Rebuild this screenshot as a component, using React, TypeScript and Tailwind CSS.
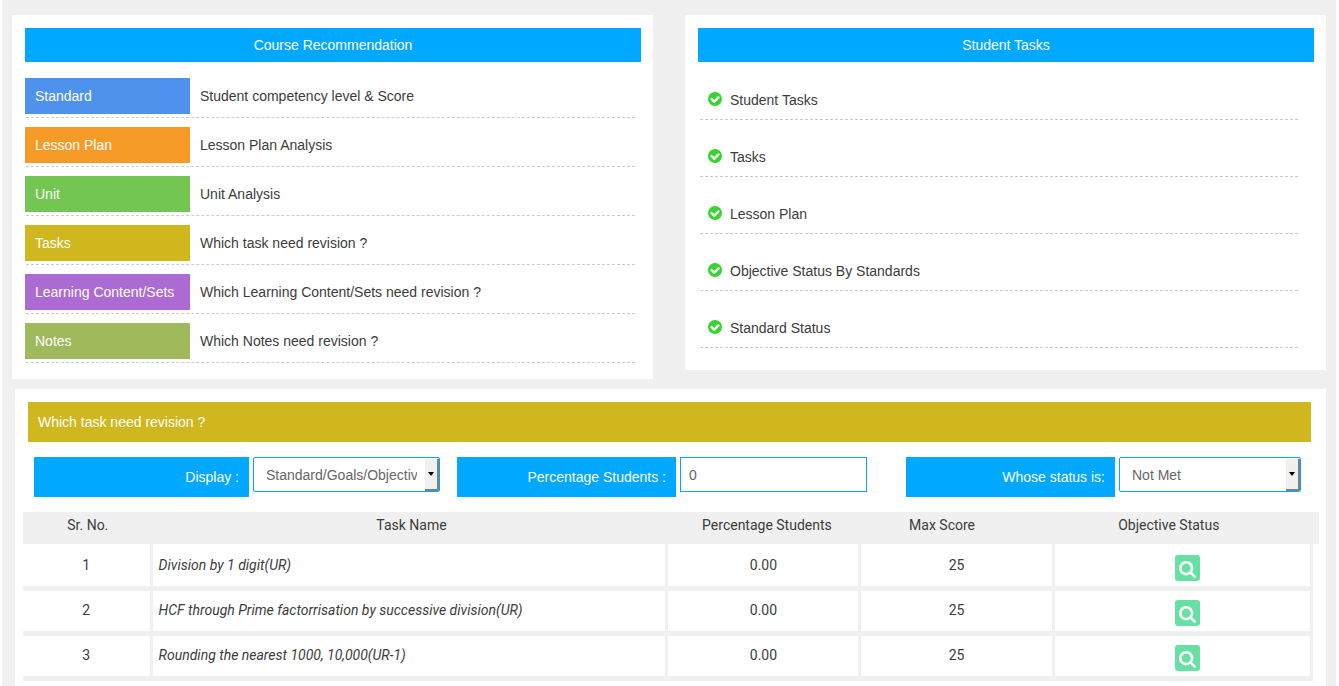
import type { ReactNode } from "react";

const courses = [
  { label: "Standard", text: "Student competency level & Score", color: "bg-[#4f92ee]" },
  { label: "Lesson Plan", text: "Lesson Plan Analysis", color: "bg-[#f79b28]" },
  { label: "Unit", text: "Unit Analysis", color: "bg-[#74c652]" },
  { label: "Tasks", text: "Which task need revision ?", color: "bg-[#d0b71d]" },
  { label: "Learning Content/Sets", text: "Which Learning Content/Sets need revision ?", color: "bg-[#ab6bd3]" },
  { label: "Notes", text: "Which Notes need revision ?", color: "bg-[#a1b95d]" },
];

const studentTasks = ["Student Tasks", "Tasks", "Lesson Plan", "Objective Status By Standards", "Standard Status"];

const rows = [
  { no: 1, name: "Division by 1 digit(UR)", percent: "0.00", max: 25 },
  { no: 2, name: "HCF through Prime factorrisation by successive division(UR)", percent: "0.00", max: 25 },
  { no: 3, name: "Rounding the nearest 1000, 10,000(UR-1)", percent: "0.00", max: 25 },
];

function CheckIcon() {
  return (
    <svg viewBox="0 128 1536 1536" className="mb-0.5 size-3.5 shrink-0 fill-[#38d430]" aria-hidden="true">
      <path d="M1284 734q0-28-18-46l-91-90q-19-19-45-19t-45 19l-408 407-226-226q-19-19-45-19t-45 19l-91 90q-18 18-18 46 0 27 18 45l362 362q19 19 45 19 27 0 46-19l543-543q18-18 18-45zm252 162q0 209-103 385.5t-279.5 279.5-385.5 103-385.5-103-279.5-279.5-103-385.5 103-385.5 279.5-279.5 385.5-103 385.5 103 279.5 279.5 103 385.5z" />
    </svg>
  );
}

function SearchIcon() {
  return (
    <svg viewBox="0 0 1664 1664" className="size-[17px] fill-white" aria-hidden="true">
      <path d="M1152 704q0-185-131.5-316.5t-316.5-131.5-316.5 131.5-131.5 316.5 131.5 316.5 316.5 131.5 316.5-131.5 131.5-316.5zm512 832q0 52-38 90t-90 38q-54 0-90-38l-343-342q-179 124-399 124-143 0-273.5-55.5t-225-150-150-225-55.5-273.5 55.5-273.5 150-225 225-150 273.5-55.5 273.5 55.5 225 150 150 225 55.5 273.5q0 220-124 399l343 343q37 37 37 90z" />
    </svg>
  );
}

function PanelTitle({ children }: { children: ReactNode }) {
  return <h2 className="flex h-[34px] items-center justify-center bg-[#00a8ff] text-white">{children}</h2>;
}

function FilterLabel({ htmlFor, children }: { htmlFor: string; children: ReactNode }) {
  return (
    <label htmlFor={htmlFor} className="flex h-10 min-w-0 items-center justify-end bg-[#00a8ff] px-2.5 text-white">
      {children}
    </label>
  );
}

function Dropdown({ id, options }: { id: string; options: string[] }) {
  return (
    <div className="relative h-[35px] min-w-0">
      <select
        id={id}
        className="h-full w-full appearance-none rounded-xs border border-[#00a8ff] bg-white pr-[22px] pl-3 text-[#666]"
      >
        {options.map((option) => (
          <option key={option}>{option}</option>
        ))}
      </select>
      <span className="pointer-events-none absolute top-0.5 right-px bottom-px flex w-3.5 items-center justify-center rounded-br-xs border-r-2 border-b-2 border-[#808080] bg-[#f0f0ee]">
        <svg viewBox="0 0 6 4" className="h-1 w-1.5" aria-hidden="true">
          <path d="M0 0h6L3 4z" />
        </svg>
      </span>
    </div>
  );
}

export default function App() {
  return (
    <div className="min-h-screen bg-white pr-[3px] pl-0.5 font-['Liberation_Sans',Arial,sans-serif] text-sm text-[#3c3c3c]">
      <div className="flex min-h-screen flex-col bg-[#f0f0f0] pt-[15px] pr-2.5">
        <div className="grid grid-cols-2 items-start gap-8 pl-2.5">
          <section className="bg-white pt-[13px] pr-3 pb-4 pl-[13px]">
            <PanelTitle>Course Recommendation</PanelTitle>
            <ul className="mt-4 flex flex-col gap-[9px]">
              {courses.map((course) => (
                <li key={course.label}>
                  <a href="#" className="flex h-9 items-center">
                    <span className={`flex h-full w-[165px] items-center pl-2.5 text-white ${course.color}`}>
                      {course.label}
                    </span>
                    <span className="pl-2.5">{course.text}</span>
                  </a>
                  <div className="mr-1.5 ml-px h-1 border-b border-dashed border-[#ccc]" />
                </li>
              ))}
            </ul>
          </section>

          <section className="bg-white pt-[13px] pr-3 pb-[22px] pl-[13px]">
            <PanelTitle>Student Tasks</PanelTitle>
            <ul className="mr-4 ml-0.5 pt-px">
              {studentTasks.map((task) => (
                <li key={task} className="flex h-[57px] items-end border-b border-dashed border-[#ccc] pb-[9px] pl-2">
                  <a href="#" className="flex items-center gap-2">
                    <CheckIcon />
                    {task}
                  </a>
                </li>
              ))}
            </ul>
          </section>
        </div>

        <section className="mt-2.5 ml-[13px] flex-1 bg-white pt-[13px]">
          <h2 className="mr-[15px] ml-[13px] flex h-10 items-center bg-[#d0b71d] pl-2.5 text-white">
            Which task need revision ?
          </h2>

          <form className="mt-[15px] mr-[25px] ml-[19px] grid grid-cols-[406fr_410fr_417fr] gap-x-[17px]">
            <div className="grid grid-cols-[215fr_187fr] gap-1">
              <FilterLabel htmlFor="display">Display :</FilterLabel>
              <Dropdown id="display" options={["Standard/Goals/Objectives", "Tasks"]} />
            </div>
            <div className="grid grid-cols-[219fr_187fr] gap-1">
              <FilterLabel htmlFor="percentage">Percentage Students :</FilterLabel>
              <input
                id="percentage"
                type="text"
                defaultValue="0"
                className="h-[35px] w-full min-w-0 border border-[#00a8ff] bg-white px-2 text-[#666]"
              />
            </div>
            <div className="grid grid-cols-[209fr_182fr] gap-1 pl-[22px]">
              <FilterLabel htmlFor="status">Whose status is:</FilterLabel>
              <Dropdown id="status" options={["Not Met", "Met"]} />
            </div>
          </form>

          <div className="mt-[15px] mr-[7px] ml-2">
            <table className="w-full table-fixed border-separate border-spacing-0 text-center font-[Roboto,sans-serif]">
              <colgroup>
                <col className="w-[10%]" />
                <col className="w-[39.8%]" />
                <col className="w-[14.9%]" />
                <col className="w-[14.9%]" />
                <col />
                <col className="w-1.5" />
              </colgroup>
              <thead>
                <tr className="h-8 bg-[#f0f0f0] align-top leading-[26px] [&>th]:font-normal">
                  <th>Sr. No.</th>
                  <th className="pl-0.5">Task Name</th>
                  <th className="pl-1">Percentage Students</th>
                  <th className="pr-8">Max Score</th>
                  <th colSpan={2} className="pr-9">Objective Status</th>
                </tr>
              </thead>
              <tbody>
                {rows.map((row) => (
                  <tr
                    key={row.no}
                    className="h-[45px] first:h-[47px] [&:not(:first-child)>td]:pb-0.5 [&>td:not(:last-child)]:border-r-3 [&>td:not(:last-child)]:border-b-5 [&>td]:border-[#f0f0f0]"
                  >
                    <td>{row.no}</td>
                    <td className="pl-1.5 text-left italic">{row.name}</td>
                    <td>{row.percent}</td>
                    <td>{row.max}</td>
                    <td className="pl-2.5">
                      <button
                        type="button"
                        aria-label={`Objective status of ${row.name}`}
                        className="mt-1.5 inline-flex h-[26px] w-[25px] items-center justify-center rounded-[3px] bg-[#66e0a3] pt-0.5 align-middle"
                      >
                        <SearchIcon />
                      </button>
                    </td>
                    <td />
                  </tr>
                ))}
              </tbody>
            </table>
          </div>
        </section>
      </div>
    </div>
  );
}
